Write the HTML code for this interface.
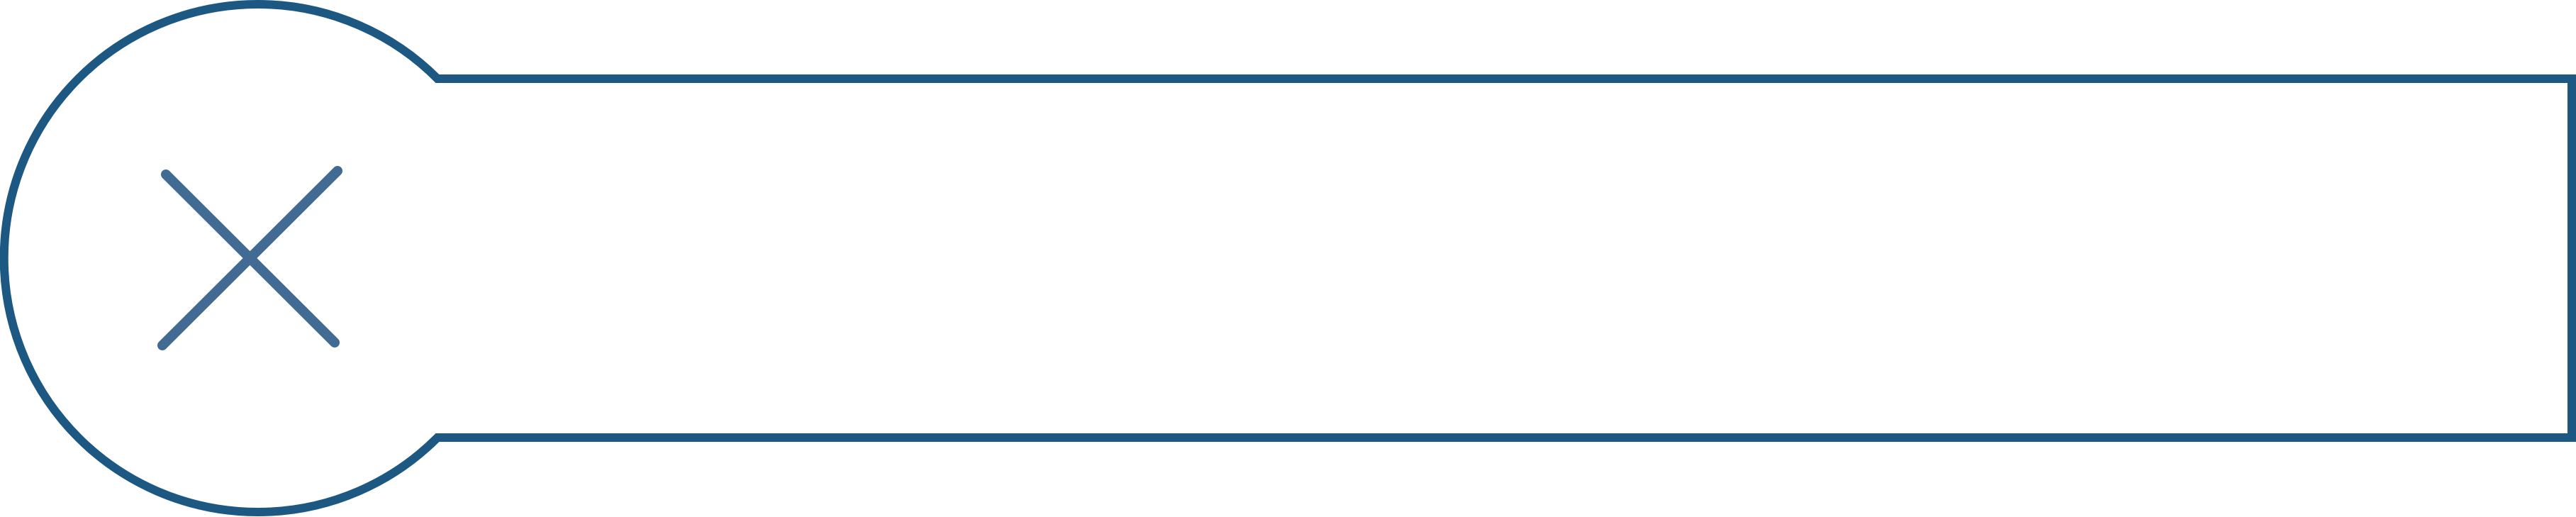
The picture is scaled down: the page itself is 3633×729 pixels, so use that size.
<!DOCTYPE html>
<html><head><meta charset="utf-8"><style>html,body{margin:0;padding:0;background:#fff;width:3633px;height:729px;overflow:hidden}svg{display:block}</style></head>
<body>
<svg width="3633" height="729" viewBox="0 0 3633 729" xmlns="http://www.w3.org/2000/svg">
<path d="M617 111 L3627 111 L3627 617 L617 617 A358 358 0 1 1 617 111 Z" fill="#fff" stroke="#1d5883" stroke-width="12"/>
<g stroke="#426b94" stroke-width="14" stroke-linecap="round">
<line x1="234" y1="246" x2="472" y2="483"/>
<line x1="476" y1="241" x2="229" y2="487"/>
</g>
</svg>
</body></html>
